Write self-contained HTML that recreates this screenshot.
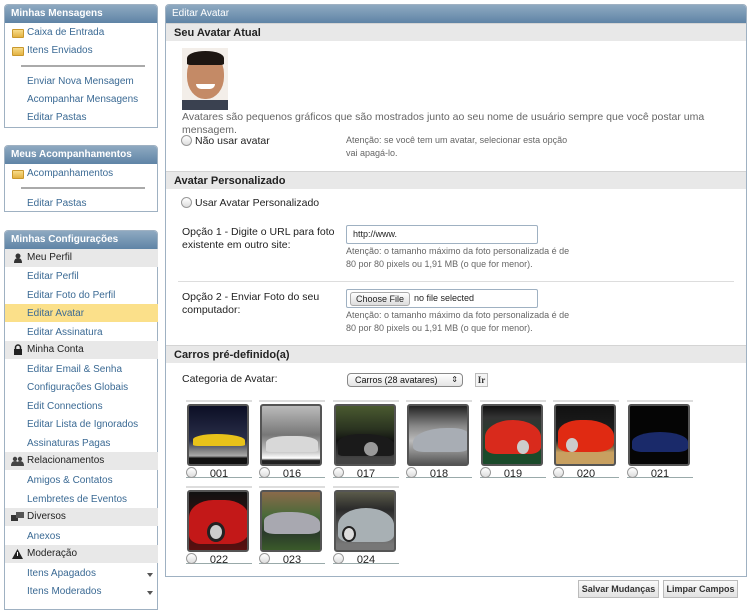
<!DOCTYPE html>
<html><head><meta charset="utf-8">
<style>
*{margin:0;padding:0;box-sizing:border-box}
body{width:748px;height:600px;background:#fff;font-family:"Liberation Sans","DejaVu Sans",sans-serif;font-size:11px;color:#333;position:relative;overflow:hidden}
.a{position:absolute;white-space:nowrap}
.box{position:absolute;left:4px;width:154px;border:1px solid #9fb1c2;background:#fff;border-radius:4px 4px 0 0}
.hd{height:18px;background:linear-gradient(#8ea9c1,#5f84a6);color:#fff;font-weight:bold;font-size:10px;line-height:18px;padding-left:6px;border-radius:3px 3px 0 0;white-space:nowrap}
.lk{position:absolute;left:22px;color:#3b6a94;font-size:10px;white-space:nowrap}
.sec{position:absolute;left:0;width:153px;height:18px;background:#e8e8e8;font-size:10px;line-height:18px;padding-left:22px;color:#222}
.fold{position:absolute;left:7px;width:12px;height:9px;background:linear-gradient(#f7dc8a,#e2b243);border-radius:1px;border:1px solid #c9982d}
.hr{position:absolute;left:16px;width:124px;height:2px;background:#aaa}
.bar{position:absolute;left:166px;width:580px;height:18px;background:#e8e8e8;font-weight:bold;font-size:11px;line-height:18px;padding-left:8px;color:#222;border-top:1px solid #d4d4d4}
.rad{display:inline-block;width:11px;height:11px;border:1px solid #999;border-radius:50%;background:linear-gradient(#fff,#ddd);vertical-align:-2px;margin-right:3px}
.note{position:absolute;left:346px;font-size:9px;color:#666;line-height:12.5px;white-space:nowrap}
.it{position:absolute;width:66px;height:78px;border-top:2px solid #ddd;border-bottom:1px solid #9aa}
.img{position:absolute;left:1px;top:2px;width:62px;height:62px;border:2px solid #555;border-radius:3px;overflow:hidden}
.it .rad{position:absolute;left:0;top:65px;width:11px;height:11px}
.it .n{position:absolute;left:0;width:66px;text-align:center;top:66px;font-size:11px;color:#222}
.btn{position:absolute;top:580px;height:18px;border:1px solid #bbb;background:linear-gradient(#fafafa,#e2e2e2);font-weight:bold;font-size:9px;line-height:16px;text-align:center;color:#333;white-space:nowrap}
</style></head><body>

<div class="box" style="top:4px;height:124px">
 <div class="hd">Minhas Mensagens</div>
 <div class="fold" style="top:24px"></div><div class="lk" style="top:22px">Caixa de Entrada</div>
 <div class="fold" style="top:42px"></div><div class="lk" style="top:40px">Itens Enviados</div>
 <div class="hr" style="top:60px"></div>
 <div class="lk" style="top:71px">Enviar Nova Mensagem</div>
 <div class="lk" style="top:89px">Acompanhar Mensagens</div>
 <div class="lk" style="top:107px">Editar Pastas</div>
</div>
<div class="box" style="top:145px;height:67px">
 <div class="hd">Meus Acompanhamentos</div>
 <div class="fold" style="top:24px"></div><div class="lk" style="top:22px">Acompanhamentos</div>
 <div class="hr" style="top:41px"></div>
 <div class="lk" style="top:52px">Editar Pastas</div>
</div>
<div class="box" style="top:230px;height:380px">
 <div class="hd">Minhas Configurações</div>
 <div class="sec" style="top:18px"><svg class="a" style="left:8px;top:4px" width="10" height="10"><circle cx="5" cy="3" r="2.5" fill="#333"/><path d="M1 10 Q1 5 5 5 Q9 5 9 10Z" fill="#333"/></svg>Meu Perfil</div>
 <div class="lk" style="top:40px">Editar Perfil</div>
 <div class="lk" style="top:59px">Editar Foto do Perfil</div>
 <div class="a" style="left:0;top:73px;width:153px;height:18px;background:#fbe08a"></div>
 <div class="lk" style="top:77px">Editar Avatar</div>
 <div class="lk" style="top:96px">Editar Assinatura</div>
 <div class="sec" style="top:110px"><svg class="a" style="left:8px;top:3px" width="10" height="11"><path d="M2.5 5V3.5a2.5 2.5 0 015 0V5" stroke="#222" stroke-width="1.5" fill="none"/><rect x="1" y="5" width="8" height="6" fill="#222"/></svg>Minha Conta</div>
 <div class="lk" style="top:133px">Editar Email &amp; Senha</div>
 <div class="lk" style="top:151px">Configurações Globais</div>
 <div class="lk" style="top:170px">Edit Connections</div>
 <div class="lk" style="top:188px">Editar Lista de Ignorados</div>
 <div class="lk" style="top:207px">Assinaturas Pagas</div>
 <div class="sec" style="top:221px"><svg class="a" style="left:6px;top:4px" width="13" height="10"><circle cx="4" cy="3" r="2.2" fill="#444"/><circle cx="9" cy="3" r="2.2" fill="#444"/><path d="M0 10Q0 5 4 5Q8 5 8 10ZM5 10Q5 5 9 5Q13 5 13 10Z" fill="#444"/></svg>Relacionamentos</div>
 <div class="lk" style="top:244px">Amigos &amp; Contatos</div>
 <div class="lk" style="top:263px">Lembretes de Eventos</div>
 <div class="sec" style="top:277px"><svg class="a" style="left:6px;top:4px" width="13" height="10"><rect x="0" y="3" width="7" height="6" fill="#333"/><rect x="5" y="0" width="8" height="6" fill="#555"/></svg>Diversos</div>
 <div class="lk" style="top:300px">Anexos</div>
 <div class="sec" style="top:314px"><svg class="a" style="left:7px;top:4px" width="11" height="10"><path d="M5.5 0L11 10H0Z" fill="#222"/><rect x="5" y="3" width="1" height="4" fill="#fff"/></svg>Moderação</div>
 <div class="lk" style="top:337px">Itens Apagados</div><div class="a" style="left:142px;top:342px;border:3px solid transparent;border-top:4px solid #555"></div>
 <div class="lk" style="top:355px">Itens Moderados</div><div class="a" style="left:142px;top:360px;border:3px solid transparent;border-top:4px solid #555"></div>
</div>

<div class="a" style="left:165px;top:4px;width:582px;height:573px;border:1px solid #9fb1c2;border-radius:4px 4px 0 0">
 <div class="hd" style="font-weight:normal;font-size:10px">Editar Avatar</div>
</div>
<div class="bar" style="top:23px">Seu Avatar Atual</div>
<div class="a" style="left:182px;top:48px;width:46px;height:62px;background:#f3eee9;overflow:hidden">
 <div class="a" style="left:5px;top:5px;width:37px;height:46px;border-radius:45% 45% 48% 48%;background:#c48a66"></div>
 <div class="a" style="left:5px;top:3px;width:37px;height:14px;border-radius:50% 50% 10% 10%;background:#1d1612"></div>
 <div class="a" style="left:14px;top:36px;width:19px;height:5px;border-radius:0 0 8px 8px;background:#fff"></div>
 <div class="a" style="left:0;top:52px;width:46px;height:10px;background:#3a4150"></div>
</div>
<div class="a" style="left:182px;top:111px;font-size:10.5px;color:#666;line-height:13px">Avatares são pequenos gráficos que são mostrados junto ao seu nome de usuário sempre que você postar uma<br>mensagem.</div>
<div class="a" style="left:181px;top:135px;font-size:10.5px;color:#222"><span class="rad"></span>Não usar avatar</div>
<div class="note" style="top:134px">Atenção: se você tem um avatar, selecionar esta opção<br>vai apagá-lo.</div>

<div class="bar" style="top:171px">Avatar Personalizado</div>
<div class="a" style="left:181px;top:197px;font-size:10.5px;color:#222"><span class="rad"></span>Usar Avatar Personalizado</div>
<div class="a" style="left:182px;top:226px;font-size:10.5px;color:#222;line-height:13px">Opção 1 - Digite o URL para foto<br>existente em outro site:</div>
<div class="a" style="left:346px;top:225px;width:192px;height:19px;border:1px solid #9fb1c2;border-radius:2px;font-size:9px;line-height:17px;padding-left:6px;color:#222">http://www.</div>
<div class="note" style="top:245px">Atenção: o tamanho máximo da foto personalizada é de<br>80 por 80 pixels ou 1,91 MB (o que for menor).</div>
<div class="a" style="left:178px;top:281px;width:556px;height:1px;background:#ddd"></div>
<div class="a" style="left:182px;top:291px;font-size:10.5px;color:#222;line-height:13px">Opção 2 - Enviar Foto do seu<br>computador:</div>
<div class="a" style="left:346px;top:289px;width:192px;height:19px;border:1px solid #9fb1c2;border-radius:2px;font-size:9px;line-height:17px;color:#222">
 <span class="a" style="left:3px;top:2px;height:14px;width:60px;border:1px solid #aaa;border-radius:3px;background:linear-gradient(#fff,#ddd);line-height:12px;text-align:center">Choose File</span>
 <span class="a" style="left:67px;top:0">no file selected</span></div>
<div class="note" style="top:309px">Atenção: o tamanho máximo da foto personalizada é de<br>80 por 80 pixels ou 1,91 MB (o que for menor).</div>

<div class="bar" style="top:345px">Carros pré-definido(a)</div>
<div class="a" style="left:182px;top:373px;font-size:10.5px;color:#222">Categoria de Avatar:</div>
<div class="a" style="left:347px;top:373px;width:116px;height:14px;border:1px solid #888;border-radius:4px;background:linear-gradient(#fff,#e4e4e4);font-size:9px;line-height:12px;padding-left:7px;color:#111">Carros (28 avatares)<span class="a" style="right:4px;top:0;font-size:8px">⇕</span></div>
<div class="a" style="left:475px;top:373px;width:13px;height:14px;border:1px solid #bbb;background:#f4f4f4;font-family:'Liberation Serif',serif;font-weight:bold;font-size:9px;line-height:12px;text-align:center">Ir</div>

<div class="it" style="left:186px;top:400px"><div class="img" style="background:linear-gradient(#0c0f25 0%,#2a2f4a 60%,#888 78%,#aaa 86%,#111 90%)"><div class="a" style="left:4px;top:28px;width:52px;height:12px;background:#e8c21a;border-radius:50% 60% 10% 10%"></div></div><span class="rad"></span><span class="n">001</span></div>
<div class="it" style="left:259px;top:400px"><div class="img" style="background:linear-gradient(#bbb,#777 50%,#ccc 80%,#fff 90%,#222 94%)"><div class="a" style="left:4px;top:30px;width:52px;height:16px;background:#d8d8d8;border-radius:40% 40% 10% 10%"></div></div><span class="rad"></span><span class="n">016</span></div>
<div class="it" style="left:333px;top:400px"><div class="img" style="background:linear-gradient(#4a5a30,#2a3320 40%,#111 60%,#444 90%)"><div class="a" style="left:2px;top:28px;width:56px;height:22px;background:#1a1a1a;border-radius:40% 50% 10% 10%"></div><div class="a" style="left:28px;top:36px;width:14px;height:14px;border-radius:50%;background:#999"></div></div><span class="rad"></span><span class="n">017</span></div>
<div class="it" style="left:406px;top:400px"><div class="img" style="background:linear-gradient(#222,#888 35%,#bbb 60%,#555)"><div class="a" style="left:4px;top:22px;width:56px;height:24px;background:#a8adb4;border-radius:60% 30% 20% 20%"></div></div><span class="rad"></span><span class="n">018</span></div>
<div class="it" style="left:480px;top:400px"><div class="img" style="background:linear-gradient(#111,#333 20%,#1a4a2a 85%)"><div class="a" style="left:2px;top:14px;width:56px;height:34px;background:#d92a1c;border-radius:50% 50% 20% 20%"></div><div class="a" style="left:34px;top:34px;width:12px;height:14px;border-radius:50%;background:#ccc"></div></div><span class="rad"></span><span class="n">019</span></div>
<div class="it" style="left:553px;top:400px"><div class="img" style="background:linear-gradient(#111,#222 60%,#c8a060 80%)"><div class="a" style="left:2px;top:14px;width:56px;height:32px;background:#e02a12;border-radius:40% 50% 30% 20%"></div><div class="a" style="left:10px;top:32px;width:12px;height:14px;border-radius:50%;background:#ccc"></div></div><span class="rad"></span><span class="n">020</span></div>
<div class="it" style="left:627px;top:400px"><div class="img" style="background:#050505"><div class="a" style="left:2px;top:26px;width:56px;height:20px;background:#1a2a6a;border-radius:50% 50% 20% 20%"></div></div><span class="rad"></span><span class="n">021</span></div>
<div class="it" style="left:186px;top:486px"><div class="img" style="background:linear-gradient(#111,#5a1010)"><div class="a" style="left:0;top:8px;width:60px;height:44px;background:#c31818;border-radius:40% 40% 30% 20%"></div><div class="a" style="left:18px;top:30px;width:18px;height:20px;border-radius:50%;background:#ccc;border:3px solid #222"></div></div><span class="rad"></span><span class="n">022</span></div>
<div class="it" style="left:259px;top:486px"><div class="img" style="background:linear-gradient(#8a6a4a,#4a6a3a 40%,#2a3a2a 70%,#3a5a2a)"><div class="a" style="left:2px;top:20px;width:56px;height:22px;background:#a8a8b0;border-radius:40% 50% 20% 20%"></div></div><span class="rad"></span><span class="n">023</span></div>
<div class="it" style="left:333px;top:486px"><div class="img" style="background:linear-gradient(#5a5a4a,#2a2a2a 30%,#777 90%)"><div class="a" style="left:2px;top:16px;width:56px;height:34px;background:#a8b0b4;border-radius:50% 50% 20% 20%"></div><div class="a" style="left:6px;top:34px;width:14px;height:16px;border-radius:50%;background:#ddd;border:2px solid #222"></div></div><span class="rad"></span><span class="n">024</span></div>

<div class="btn" style="left:578px;width:81px">Salvar Mudanças</div>
<div class="btn" style="left:663px;width:75px">Limpar Campos</div>
</body></html>
